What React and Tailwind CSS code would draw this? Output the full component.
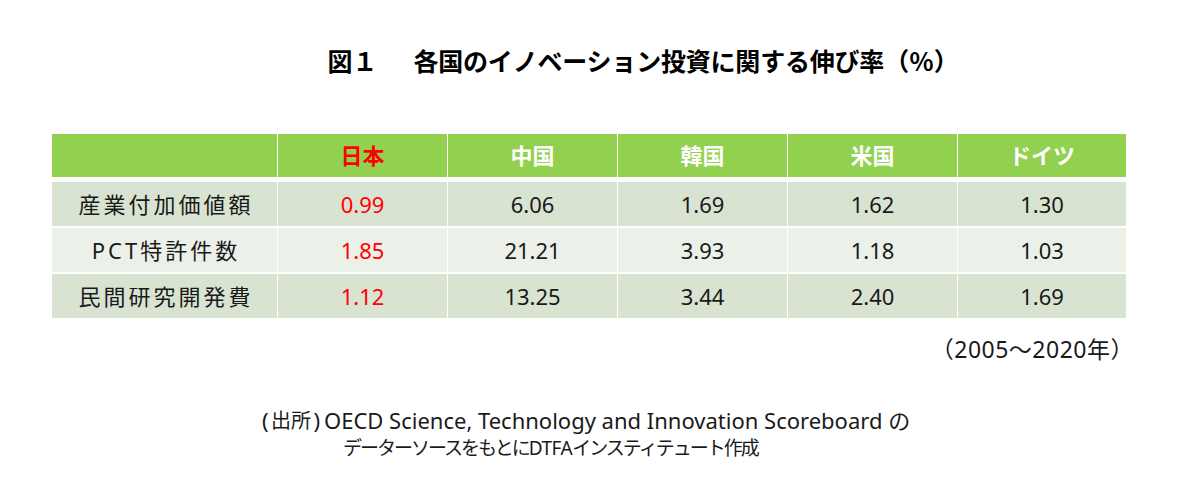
import React from 'react';

const countries = ['日本', '中国', '韓国', '米国', 'ドイツ'];

const rows = [
  { label: '産業付加価値額', values: ['0.99', '6.06', '1.69', '1.62', '1.30'] },
  { label: 'PCT特許件数', values: ['1.85', '21.21', '3.93', '1.18', '1.03'] },
  { label: '民間研究開発費', values: ['1.12', '13.25', '3.44', '2.40', '1.69'] },
];

const font = { fontFamily: '"Noto Sans", "Noto Sans CJK JP", sans-serif' };
const cjk = { fontFamily: '"Noto Sans CJK JP", sans-serif' };

export default function App() {
  return (
    <div className="w-[1180px] h-[479px] bg-white text-[#1a1a1a] flex flex-col" style={font}>
      {/* title */}
      <div className="h-[120px] flex items-start justify-center pt-[43px] pl-[106px]">
        <h1 className="text-[25px] leading-[34px] font-bold text-black flex" style={cjk}>
          <span>図１</span>
          <span className="ml-[36px] tracking-[-0.2px]">各国のイノベーション投資に関する伸び率（％）</span>
        </h1>
      </div>

      {/* table */}
      <div className="ml-[52px] mt-[14px] w-[1074px]">
        <div className="grid grid-cols-[225px_169px_169px_169px_169px_168px] gap-x-px h-[43px]">
          <div className="bg-[#92d050]" />
          {countries.map((c, i) => (
            <div
              key={c}
              className={`bg-[#92d050] flex items-center justify-center text-[22px] font-bold ${i === 0 ? 'text-[#ff0000]' : 'text-white'}`}
            >
              {c}
            </div>
          ))}
        </div>

        <div className="mt-[5px] flex flex-col gap-y-[2px]">
          {rows.map((r, ri) => (
            <div
              key={r.label}
              className="grid grid-cols-[225px_169px_169px_169px_169px_168px] gap-x-px h-[44px]"
            >
              <div className={`${ri % 2 === 0 ? 'bg-[#d8e4d1]' : 'bg-[#ebf0e9]'} flex items-center justify-center text-[22px] tracking-[3px] pl-[3px]`}>
                {r.label}
              </div>
              {r.values.map((v, i) => (
                <div
                  key={i}
                  className={`${ri % 2 === 0 ? 'bg-[#d8e4d1]' : 'bg-[#ebf0e9]'} flex items-center justify-center text-[22px] ${i === 0 ? 'text-[#ff0000]' : ''}`}
                >
                  {v}
                </div>
              ))}
            </div>
          ))}
        </div>

        <div className="mt-[16px] flex justify-end mr-[-8px]">
          <span className="text-[23px] leading-[30px] tracking-[0.5px]">（2005～2020年）</span>
        </div>
      </div>

      {/* source */}
      <div className="mt-[42px] ml-[262px]">
        <div className="flex text-[22px] leading-[29px]">
          <span className="w-[58px] flex justify-between">
            <span>(</span>
            <span className="text-[20px]">出所</span>
            <span>)</span>
          </span>
          <span className="ml-[4px]">OECD Science, Technology and Innovation Scoreboard の</span>
        </div>
        <div className="ml-[81px] text-[19px] leading-[26px] tracking-[-2px]">
          データーソースをもとに<span className="tracking-[-0.5px]">DTFA</span>インスティテュート作成
        </div>
      </div>
    </div>
  );
}
